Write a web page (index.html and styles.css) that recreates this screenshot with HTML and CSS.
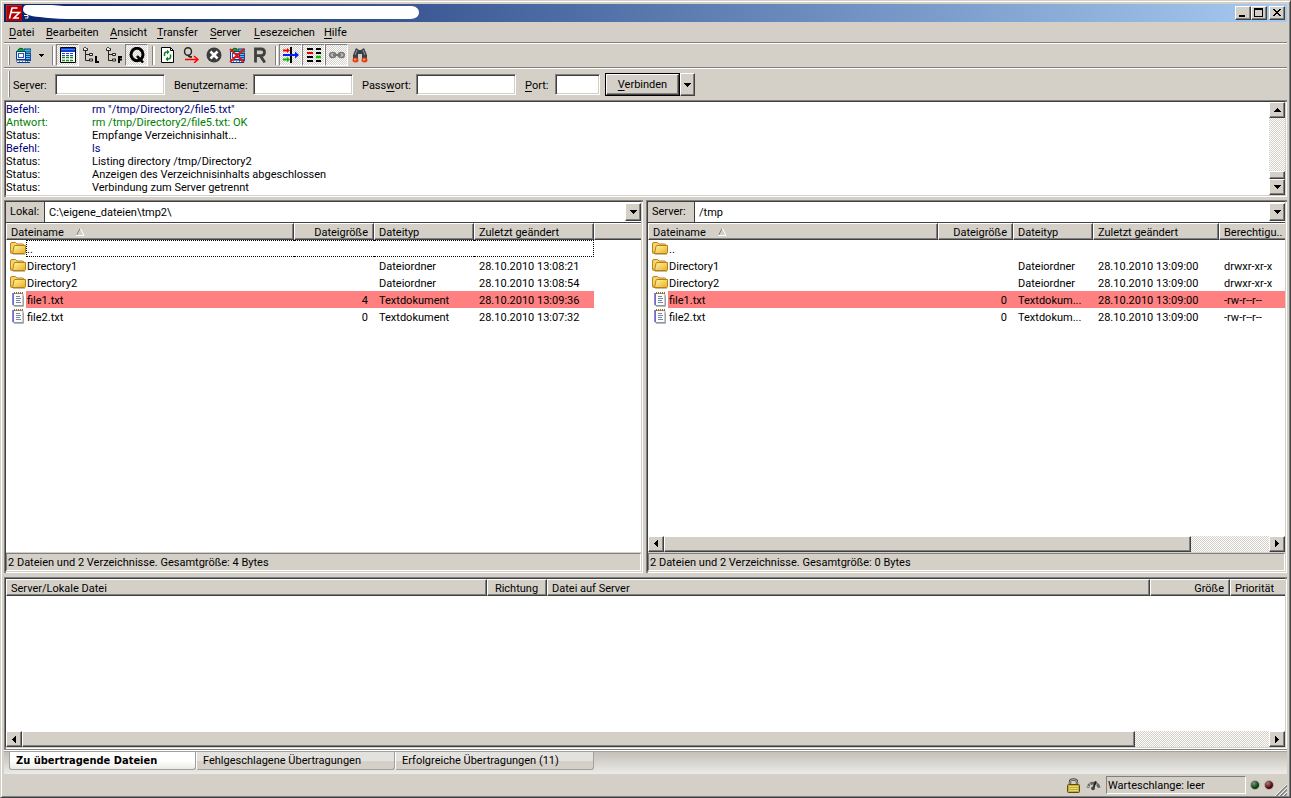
FILE: index.html
```
<!DOCTYPE html>
<html lang="de">
<head>
<meta charset="utf-8">
<title>FileZilla</title>
<link rel="stylesheet" href="styles.css">
</head>
<body>
<svg class="defs" width="0" height="0" aria-hidden="true">
  <defs>
    <linearGradient id="gold" x1="0" y1="0" x2="1" y2="1"><stop offset="0" stop-color="#fff6a8"/><stop offset="1" stop-color="#e8b020"/></linearGradient>
    <symbol id="folder" viewBox="0 0 16 16">
      <path d="M.5 11V3Q.5 1.500 2 1.500h3.500L7 3h5.500q1.500 0 1.500 1.500V6" fill="#f4d568" stroke="#bb8320"/>
      <path d="M.5 10v1.500q0 1 1 1h2z" fill="#f4d568" stroke="#bb8320"/>
      <path d="M2.500 12.500L4 5.500q.2-1 1-1h10.500v7q0 1-1 1z" fill="url(#gold)" stroke="#b77f16"/>
      <path d="M3 13.500h12" stroke="#8f8050" opacity=".5"/>
    </symbol>
    <symbol id="text" viewBox="0 0 16 16">
      <path d="M3.500 1.500h9l.5 1v11H3.500z" fill="#f8fbff" stroke="#8d97a4"/>
      <path d="M3 1v12" stroke="#6860c8" stroke-width="1.500"/>
      <path d="M4 14.500h9.500V4" fill="none" stroke="#8a8a8a" opacity=".6"/>
      <path d="M4 1h9" stroke="#a06a20" stroke-width="2" stroke-dasharray="1 1"/>
      <path d="M6 4.500h4M6 6.500h5M6 8.500h4M6 10.500h5" stroke="#7c8791"/>
    </symbol>
    <symbol id="sites" viewBox="0 0 16 16">
      <path d="M9 2h7v3H9z" fill="#20c8e0" stroke="#103878"/>
      <path d="M10 6h6v8h-6z" fill="#1747a0"/><path d="M11 7.500h4M11 9.500h4M11 11.500h4" stroke="#50c8f0"/>
      <path d="M1 5Q4-1 9 2v3z" fill="#18a030"/><path d="M3 3q2-3 5-1" fill="none" stroke="#075a18"/>
      <path d="M1.500 4.500h9v8h-9z" fill="#e8f0ff" stroke="#0a3a90"/><path d="M3 6h6v5H3z" fill="#2058c0"/><path d="M4 7h4v3H4z" fill="#fff"/>
      <path d="M1 14h12M2 15.500h13" stroke="#0a3a90"/><path d="M2 14.500h10" stroke="#fff" stroke-dasharray="2 1"/>
    </symbol>
    <symbol id="up" viewBox="0 0 7 4"><path d="M3 0h1v1h1v1h1v1h1v1H0V3h1V2h1V1h1z"/></symbol>
    <symbol id="down" viewBox="0 0 7 4"><path d="M0 0h7v1H6v1H5v1H4v1H3V3H2V2H1V1H0z"/></symbol>
    <symbol id="left" viewBox="0 0 4 7"><path d="M4 0v7H3V6H2V5H1V4H0V3h1V2h1V1h1V0z"/></symbol>
    <symbol id="right" viewBox="0 0 4 7"><path d="M0 0v7h1V6h1V5h1V4h1V3H3V2H2V1H1V0z"/></symbol>
    <symbol id="sort" viewBox="0 0 9 8"><path d="M0.500 7.500L4 0.500" stroke="#808080"/><path d="M4.500 0.500L8 7.500H0" stroke="#fff" fill="none"/></symbol>
    <symbol id="tree" viewBox="0 0 16 16">
      <path d="M2.500 4v9.500H7M2.500 7.500H7" fill="none" stroke="#222"/>
      <path d="M.5 3.500v-2L1.500.5h1l1 1h1v2zM6.500 8.500v-2h3v2zM6.500 14v-2h3v2z" fill="#eee" stroke="#222"/>
    </symbol>
  </defs>
</svg>
<div class="window">
  <header class="titlebar">
    <svg class="logo" viewBox="0 0 16 16" role="img" aria-label="FileZilla"><path d="M0 0h16v16H0z" fill="#b00000"/><path d="M0 16V0h16" fill="none" stroke="#d84040"/><path d="M3.500 13.500L6 3h5.500M5 7.500h4.500M8.500 7.500h5l-5.500 5.500h5" fill="none" stroke="#fff" stroke-width="1.600"/></svg>
    <svg class="smudge" viewBox="0 0 398 18" aria-hidden="true"><path d="M5 1H30L42 2H390q7 1 7 6.500t-8 6.500H45Q28 14.500 18 13 2 12 1 6 1 1 5 1z" fill="#fff"/><path d="M2 11.500h4v2.500H3" fill="none" stroke="#fff"/></svg>
    <div class="winbuttons">
      <button class="raised" aria-label="Minimieren"><svg width="12" height="10"><path d="M2 7h6v2H2z"/></svg></button>
      <button class="raised" aria-label="Maximieren"><svg width="12" height="10"><path d="M1 0h9v9H1zM2 2v6h7V2z" fill-rule="evenodd"/></svg></button>
      <button class="raised close" aria-label="Schließen"><svg width="12" height="10"><path d="M2 1h2v1h1v1h2V2h1V1h2v1H9v1H8v1H7v1h1v1h1v1h1v1H8V7H7V6H5v1H4v1H2V7h1V6h1V5h1V4H4V3H3V2H2z"/></svg></button>
    </div>
  </header>
  <nav class="menu">
    <a href="#"><u>D</u>atei</a><a href="#"><u>B</u>earbeiten</a><a href="#"><u>A</u>nsicht</a><a href="#"><u>T</u>ransfer</a><a href="#"><u>S</u>erver</a><a href="#"><u>L</u>esezeichen</a><a href="#"><u>H</u>ilfe</a>
  </nav>
  <div class="toolbar">
    <i class="grip"></i>
    <button class="tool first" aria-label="Servermanager"><svg viewBox="0 0 16 16"><use href="#sites"/></svg></button>
    <button class="tool drop" aria-label="Serverliste"><svg class="tiny" viewBox="0 0 5 3"><path d="M0 0h5v1H4v1H3v1H2V2H1V1H0z"/></svg></button>
    <i class="sep"></i>
    <button class="tool pressed" aria-label="Nachrichtenprotokoll"><svg viewBox="0 0 16 16"><path d="M.5.500h15v15H.5z" fill="#fff" stroke="#000"/><path d="M1 1h14v4H1z" fill="#1040d0"/><path d="M1 2.500h14" stroke="#4080f0"/><path d="M2 6.500h12M2 8.500h12" stroke="#2040e0" stroke-dasharray="3 1"/><path d="M2 10.500h12M2 13.500h12" stroke="#109020" stroke-width="1.500" stroke-dasharray="3 1"/></svg></button>
    <button class="tool" aria-label="Lokaler Verzeichnisbaum"><svg viewBox="0 0 16 16"><use href="#tree"/><path d="M13 9v6h3" fill="none" stroke="#000" stroke-width="2"/></svg></button>
    <button class="tool" aria-label="Server-Verzeichnisbaum"><svg viewBox="0 0 16 16"><use href="#tree"/><path d="M13 16V10h3M13 12.500h3" fill="none" stroke="#000" stroke-width="2"/></svg></button>
    <button class="tool pressed" aria-label="Warteschlange"><svg viewBox="0 0 16 16"><ellipse cx="8" cy="7.500" rx="6" ry="6.200" fill="none" stroke="#000" stroke-width="3"/><path d="M8 9l6 6.500" stroke="#000" stroke-width="2.500"/></svg></button>
    <i class="sep"></i>
    <button class="tool" aria-label="Aktualisieren"><svg viewBox="0 0 16 16"><path d="M1.500.500h9l3 3v12h-12z" fill="#fff" stroke="#000"/><path d="M10.500.500v3h3" fill="none" stroke="#000"/><path d="M4.500 9V7q0-2 2.500-2M10.500 7.500V10q0 2-2.500 2" fill="none" stroke="#108020" stroke-width="1.500"/><path d="M7 2.500v5L9.500 5zM8 9.500v5L5.500 12z" fill="#108020"/></svg></button>
    <button class="tool" aria-label="Warteschlange verarbeiten"><svg viewBox="0 0 16 16"><ellipse cx="5" cy="4.500" rx="3.500" ry="3.800" fill="none" stroke="#222" stroke-width="1.400"/><path d="M5 8q.5 2 4 2" fill="none" stroke="#222" stroke-width="1.500"/><path d="M2 12.500h13M11 9l4 3.500-4 3.500" fill="none" stroke="#f00" stroke-width="1.500"/></svg></button>
    <button class="tool" aria-label="Abbrechen"><svg viewBox="0 0 16 16"><circle cx="8" cy="8" r="7.500" fill="#3c3c3c"/><path d="M4.500 4.500l7 7M11.500 4.500l-7 7" stroke="#fff" stroke-width="2.500"/></svg></button>
    <button class="tool" aria-label="Trennen"><svg viewBox="0 0 16 16"><use href="#sites"/><path d="M1 2l14 13M15 2L1 15" stroke="#f01010" stroke-width="2"/></svg></button>
    <button class="tool" aria-label="Wiederherstellen"><svg viewBox="0 0 16 16"><path d="M3.500 15.500V2H9q3.500 0 3.500 3.200T9 8.700H4M8.500 9l4.300 6.500" fill="none" stroke="#404040" stroke-width="2.800"/></svg></button>
    <i class="sep"></i>
    <button class="tool pressed" aria-label="Filter"><svg viewBox="0 0 16 16"><path d="M8 0v16" stroke="#000" stroke-width="2"/><path d="M0 3.500h5" stroke="#f00" stroke-width="2"/><path d="M4 1v5l3-2.500z" fill="#f00"/><path d="M0 12.500h5" stroke="#0b0" stroke-width="2"/><path d="M4 10v5l3-2.500z" fill="#0b0"/><path d="M0 8h14" stroke="#0020ff" stroke-width="2"/><path d="M12 4.500v7L16 8z" fill="#0020ff"/></svg></button>
    <button class="tool pressed" aria-label="Verzeichnisvergleich"><svg viewBox="0 0 16 16"><path d="M1 2h6M10 2h5M10 6h5M1 10h6M1 14h6M10 14h5" stroke="#000" stroke-width="2"/><path d="M1 6h6" stroke="#e00" stroke-width="2"/><path d="M10 10h5" stroke="#0c0" stroke-width="2.500"/></svg></button>
    <button class="tool pressed" aria-label="Synchronisiertes Navigieren"><svg viewBox="0 0 16 16"><ellipse cx="3.700" cy="8" rx="3" ry="2.500" fill="#bbb" stroke="#777" stroke-width="1.500"/><ellipse cx="12.300" cy="8" rx="3" ry="2.500" fill="#bbb" stroke="#777" stroke-width="1.500"/><path d="M4 8h8" stroke="#777" stroke-width="2"/></svg></button>
    <button class="tool" aria-label="Suche"><svg viewBox="0 0 16 16"><path d="M4 1L7 3h2l3-2 3 7v6h-5V7H6v7H1V8z" fill="#3a4048"/><path d="M5 3L3 8M11 3l2 5" stroke="#99a"/><ellipse cx="3.500" cy="13" rx="3" ry="2.500" fill="#e84010"/><ellipse cx="12.500" cy="13" rx="3" ry="2.500" fill="#e84010"/><circle cx="3" cy="12.500" r="1" fill="#fa9"/><circle cx="12" cy="12.500" r="1" fill="#fa9"/></svg></button>
  </div>
  <form class="connect">
    <i class="grip"></i>
    <label for="host">Se<u>r</u>ver:</label><input id="host" type="text">
    <label for="user">Ben<u>u</u>tzername:</label><input id="user" type="text">
    <label for="pass">Pass<u>w</u>ort:</label><input id="pass" type="password">
    <label for="port"><u>P</u>ort:</label><input id="port" type="text">
    <button class="go" type="button"><span class="raised"><span><u>V</u>erbinden</span></span></button><button class="raised history" type="button" aria-label="Verlauf"><svg class="v"><use href="#down"/></svg></button>
  </form>

  <section class="log sunken">
    <dl>
      <dt class="cmd">Befehl:</dt><dd class="cmd">rm "/tmp/Directory2/file5.txt"</dd>
      <dt class="reply">Antwort:</dt><dd class="reply">rm /tmp/Directory2/file5.txt: OK</dd>
      <dt>Status:</dt><dd>Empfange Verzeichnisinhalt...</dd>
      <dt class="cmd">Befehl:</dt><dd class="cmd">ls</dd>
      <dt>Status:</dt><dd>Listing directory /tmp/Directory2</dd>
      <dt>Status:</dt><dd>Anzeigen des Verzeichnisinhalts abgeschlossen</dd>
      <dt>Status:</dt><dd>Verbindung zum Server getrennt</dd>
    </dl>
    <div class="vscroll"><button class="raised" aria-label="Nach oben"><svg class="v"><use href="#up"/></svg></button><div class="thumb raised"></div><button class="raised" aria-label="Nach unten"><svg class="v"><use href="#down"/></svg></button></div>
  </section>

  <main class="panes">
    <section class="pane sunken">
      <div class="address local"><label for="lpath">Lokal:</label><div class="combo"><select id="lpath"><option>C:\eigene_dateien\tmp2\</option></select><span class="raised arrow"><svg class="v"><use href="#down"/></svg></span></div></div>
      <div class="list">
        <table class="files">
          <colgroup><col class="w288"><col class="w80"><col class="w100"><col class="w120"><col></colgroup>
          <thead><tr><th>Dateiname<svg class="sort"><use href="#sort"/></svg></th><th class="num">Dateigröße</th><th>Dateityp</th><th>Zuletzt geändert</th><th></th></tr></thead>
          <tbody>
            <tr class="focus"><td><div class="name"><svg><use href="#folder"/></svg><span>..</span></div></td><td></td><td></td><td></td><td></td></tr>
            <tr><td><div class="name"><svg><use href="#folder"/></svg><span>Directory1</span></div></td><td></td><td>Dateiordner</td><td>28.10.2010 13:08:21</td><td></td></tr>
            <tr><td><div class="name"><svg><use href="#folder"/></svg><span>Directory2</span></div></td><td></td><td>Dateiordner</td><td>28.10.2010 13:08:54</td><td></td></tr>
            <tr class="diff"><td><div class="name"><svg><use href="#text"/></svg><span>file1.txt</span></div></td><td class="num">4</td><td>Textdokument</td><td>28.10.2010 13:09:36</td><td class="rest"></td></tr>
            <tr><td><div class="name"><svg><use href="#text"/></svg><span>file2.txt</span></div></td><td class="num">0</td><td>Textdokument</td><td>28.10.2010 13:07:32</td><td></td></tr>
          </tbody>
        </table>
      </div>
      <p class="summary">2 Dateien und 2 Verzeichnisse. Gesamtgröße: 4 Bytes</p>
    </section>
    <section class="pane sunken">
      <div class="address remote"><label for="rpath">Server:</label><div class="combo"><select id="rpath"><option>/tmp</option></select><span class="raised arrow"><svg class="v"><use href="#down"/></svg></span></div></div>
      <div class="list">
        <table class="files">
          <colgroup><col class="w290"><col class="w75"><col class="w80"><col class="w126"><col></colgroup>
          <thead><tr><th>Dateiname<svg class="sort"><use href="#sort"/></svg></th><th class="num">Dateigröße</th><th>Dateityp</th><th>Zuletzt geändert</th><th class="cut">Berechtigu..</th></tr></thead>
          <tbody>
            <tr><td><div class="name"><svg><use href="#folder"/></svg><span>..</span></div></td><td></td><td></td><td></td><td></td></tr>
            <tr><td><div class="name"><svg><use href="#folder"/></svg><span>Directory1</span></div></td><td></td><td>Dateiordner</td><td>28.10.2010 13:09:00</td><td>drwxr-xr-x</td></tr>
            <tr><td><div class="name"><svg><use href="#folder"/></svg><span>Directory2</span></div></td><td></td><td>Dateiordner</td><td>28.10.2010 13:09:00</td><td>drwxr-xr-x</td></tr>
            <tr class="diff"><td><div class="name"><svg><use href="#text"/></svg><span>file1.txt</span></div></td><td class="num">0</td><td>Textdokum...</td><td>28.10.2010 13:09:00</td><td>-rw-r--r--</td></tr>
            <tr><td><div class="name"><svg><use href="#text"/></svg><span>file2.txt</span></div></td><td class="num">0</td><td>Textdokum...</td><td>28.10.2010 13:09:00</td><td>-rw-r--r--</td></tr>
          </tbody>
        </table>
      </div>
      <div class="hscroll files-scroll"><button class="raised" aria-label="Nach links"><svg class="h"><use href="#left"/></svg></button><div class="thumb raised"></div><button class="raised" aria-label="Nach rechts"><svg class="h"><use href="#right"/></svg></button></div>
      <p class="summary">2 Dateien und 2 Verzeichnisse. Gesamtgröße: 0 Bytes</p>
    </section>
  </main>

  <section class="queue sunken">
    <div class="list">
      <table class="files">
        <colgroup><col class="w481"><col class="w60"><col><col class="w80"><col class="w55"></colgroup>
        <thead><tr><th>Server/Lokale Datei</th><th class="mid">Richtung</th><th>Datei auf Server</th><th class="num">Größe</th><th class="cut">Priorität</th></tr></thead>
      </table>
    </div>
    <div class="hscroll queue-scroll"><button class="raised" aria-label="Nach links"><svg class="h"><use href="#left"/></svg></button><div class="thumb raised"></div><button class="raised" aria-label="Nach rechts"><svg class="h"><use href="#right"/></svg></button></div>
  </section>
  <div class="tabs" role="tablist">
    <button role="tab" class="tab active" aria-selected="true">Zu übertragende Dateien</button><button role="tab" class="tab">Fehlgeschlagene Übertragungen</button><button role="tab" class="tab">Erfolgreiche Übertragungen (11)</button>
  </div>
  <footer class="status">
    <svg width="13" height="15" viewBox="0 0 13 15"><path d="M3 7V4q0-2.500 3.500-2.500T10 4v3" fill="none" stroke="#444" stroke-width="2.400"/><path d="M3 7V4q0-2.500 3.500-2.500T10 4v3" fill="none" stroke="#ccc" stroke-width=".8"/><rect x=".5" y="6.500" width="12" height="8" rx="1" fill="#c8ac38" stroke="#5a4a14"/><path d="M2 8.500h9M2 10.500h9M2 12.500h9" stroke="#e8d670"/></svg>
    <svg width="15" height="12" viewBox="0 0 16 12"><path d="M2 9Q3 4 8 4t6 5" fill="none" stroke="#666" stroke-width="3"/><path d="M4 4l1 3M11.500 4.500L10 7M1 7l3 1" stroke="#ccc"/><path d="M7.500 10l3-8" stroke="#222" stroke-width="2"/><circle cx="7.500" cy="9.500" r="2" fill="#444"/></svg>
    <span class="queue-state">Warteschlange: leer</span>
    <i class="led green"></i><i class="led red"></i>
    <svg class="size" width="12" height="12" viewBox="0 0 12 12"><path d="M0 12L12 0M4 12l8-8M8 12l4-4" stroke="#fff"/><path d="M1 12.500L12.500 1M5 12.500L12.500 5M9 12.500L12.500 9" stroke="#808080" stroke-width="1.500"/></svg>
  </footer>
</div>
</body>
</html>
```
FILE: styles.css
```
:root {
  --face: #d4d0c8;
  --shade: #808080;
  --dark: #404040;
}
* { box-sizing: border-box; }
body, button, input, select {
  font-family: Roboto, "Liberation Sans", sans-serif;
  font-size: 11px;
  line-height: 13px;
  color: #000;
}
body { margin: 0; background: var(--face); }
button { padding: 0; background: var(--face); border: 0; }
svg { display: block; flex: none; }
.defs { position: absolute; }
u { text-underline-offset: 2px; text-decoration-thickness: 1px; }

.window {
  display: flex;
  flex-direction: column;
  min-height: 100vh;
  border: 1px solid var(--face);
  border-right-color: var(--dark);
  border-bottom-color: var(--dark);
  box-shadow: inset 1px 1px #fff, inset -1px -1px var(--shade);
  padding: 3px 3px 1px;
}
.raised {
  background: var(--face);
  border: 1px solid #fff;
  border-right-color: var(--dark);
  border-bottom-color: var(--dark);
  box-shadow: inset -1px -1px var(--shade);
}
.raised, .winbuttons button, .arrow { display: flex; align-items: center; justify-content: center; }
.sunken {
  border: 1px solid;
  border-color: var(--dark) var(--face) var(--face) var(--dark);
  background: #fff;
  margin: 1px;
  box-shadow: -1px -1px var(--shade), 1px 1px #fff, 1px -1px var(--shade), -1px 1px var(--shade);
}
.v { width: 7px; height: 4px; }
.h { width: 4px; height: 7px; }

.titlebar {
  display: flex;
  align-items: center;
  height: 18px;
  padding: 0 2px;
  background: linear-gradient(90deg, #0a246a, #a6caf0);
}
.logo { width: 16px; height: 16px; }
.smudge { width: 398px; height: 18px; }
.winbuttons { display: flex; margin-left: auto; }
.winbuttons button { width: 16px; height: 14px; }
.winbuttons .close { margin-left: 2px; }

.menu {
  display: grid;
  grid-template-columns: 37px 64px 47px 53px 44px 70px auto;
  height: 22px;
  padding-left: 5px;
  border-bottom: 1px solid #fff;
  box-shadow: inset 0 -1px var(--shade);
}
.menu a { color: #000; text-decoration: none; line-height: 21px; white-space: nowrap; }

.toolbar {
  display: flex;
  height: 25px;
  padding-left: 3px;
  border-bottom: 1px solid #fff;
  box-shadow: inset 0 -1px var(--shade);
}
.grip { width: 3px; margin: 2px 0 3px; border-right: 1px solid var(--shade); box-shadow: inset -1px 0 #fff; }
.sep { width: 8px; padding: 2px 2px 2px 4px; }
.sep::before { content: ""; display: block; width: 2px; height: 19px; border-left: 1px solid var(--shade); background: #fff; }
.tool { display: flex; align-items: center; justify-content: center; width: 23px; height: 22px; border: 1px solid transparent; }
.tool.first { margin-left: 1px; }
.tool svg { width: 16px; height: 16px; }
.tool.drop { width: 14px; }
.tool .tiny { width: 5px; height: 3px; }
.tool.pressed {
  border-color: var(--shade) #fff #fff var(--shade);
  background: repeating-conic-gradient(#fff 0 25%, var(--face) 0 50%) 0 0 / 2px 2px;
}

.connect {
  display: grid;
  grid-template-columns: 6px 42px 119px 79px 109px 54px 109px 30px 50px 75px 15px;
  align-items: center;
  height: 31px;
  padding-left: 3px;
}
.connect .grip { align-self: stretch; justify-self: start; }
.connect label { padding-top: 2px; }
.connect input {
  height: 21px;
  min-width: 0;
  border: 1px solid;
  border-color: var(--shade) #fff #fff var(--shade);
  box-shadow: inset 1px 1px var(--dark), inset -1px -1px var(--face);
  background: #fff;
  padding: 2px 4px;
}
#host, #user, #pass { margin-right: 9px; }
#port { margin-right: 5px; }
.go { height: 23px; border: 1px solid #000; display: flex; align-items: stretch; }
.go .raised { flex: 1; }
.history { height: 23px; }

.log { display: flex; height: 95px; flex: none; }
.log dl { flex: 1; display: grid; grid-template-columns: 86px 1fr; grid-auto-rows: 13px; margin: 0; padding-top: 1px; }
.log dt, .log dd { margin: 0; }
.cmd { color: #000080; }
.reply { color: #008000; }
.vscroll, .hscroll { display: flex; background: repeating-conic-gradient(#fff 0 25%, var(--face) 0 50%) 0 0 / 2px 2px; }
.vscroll { flex-direction: column; width: 16px; }
.vscroll button { height: 16px; flex: none; }
.vscroll .thumb { height: 8px; margin-top: auto; }
.hscroll { height: 16px; flex: none; }
.hscroll button { width: 16px; flex: none; }
.hscroll button:last-child { margin-left: auto; }
.files-scroll .thumb { width: 82.7%; }
.queue-scroll .thumb { width: 87%; }

.panes { display: grid; grid-template-columns: 639fr 641fr; gap: 3px; flex: 376 1 0; margin-top: 3px; }
.pane { display: flex; flex-direction: column; min-width: 0; }
.address { display: flex; height: 21px; border-bottom: 1px solid var(--dark); flex: none; }
.address label { background: var(--face); border-right: 1px solid var(--dark); padding-left: 4px; line-height: 20px; flex: none; }
.local label { width: 39px; }
.remote label { width: 47px; }
.combo { flex: 1; display: flex; position: relative; }
.combo select { flex: 1; appearance: none; border: 0; background: #fff; padding: 0 4px; }
.arrow { position: absolute; right: 0; top: 1px; bottom: 1px; width: 16px; pointer-events: none; }
.list { flex: 1; min-height: 0; overflow: hidden; }
.files { width: 100%; table-layout: fixed; border-spacing: 0; }
.files th {
  height: 17px;
  padding: 2px 5px 0 4px;
  background: var(--face);
  font-weight: normal;
  text-align: left;
  white-space: nowrap;
  line-height: 13px;
  border: 1px solid var(--dark);
  border-left-color: #fff;
  border-top-color: #fff;
  box-shadow: inset -1px -1px var(--shade);
}
.files th:last-child { border-right: 0; box-shadow: inset 0 -1px var(--shade); }
.files .cut { padding-right: 0; overflow: hidden; }
.files td { height: 17px; padding: 2px 6px 0 5px; line-height: 15px; white-space: nowrap; }
.files td:first-child { padding: 0; }
.files .num { text-align: right; }
.files .mid { text-align: center; }
.sort { display: inline-block; width: 9px; height: 8px; margin-left: 12px; }
.name { display: flex; align-items: flex-end; padding-left: 4px; height: 17px; }
.name svg { width: 16px; height: 16px; }
.name span { flex: 1; height: 17px; padding: 2px 0 0 1px; line-height: 15px; }
.diff .name span, .diff td:not(:first-child):not(.rest) { background: #ff8080; }
.focus .name span { border: 1px dotted #000; border-right: 0; padding: 1px 0 0; }
.focus td:nth-child(n+2):nth-child(-n+4) { border-top: 1px dotted #000; border-bottom: 1px dotted #000; }
.focus td:nth-child(4) { border-right: 1px dotted #000; }
.summary {
  margin: 1px 0 0;
  padding-left: 1px;
  height: 18px;
  line-height: 18px;
  background: var(--face);
  border: 1px solid;
  border-color: var(--shade) #fff #fff var(--shade);
  box-shadow: 0 -1px var(--face);
  flex: none;
}
.w55 { width: 55px; }
.w60 { width: 60px; }
.w75 { width: 75px; }
.w80 { width: 80px; }
.w100 { width: 100px; }
.w120 { width: 120px; }
.w126 { width: 126px; }
.w288 { width: 288px; }
.w290 { width: 290px; }
.w481 { width: 481px; }

.queue { display: flex; flex-direction: column; flex: 170 1 0; margin-top: 5px; }

.tabs {
  display: flex;
  height: 25px;
  padding: 0 0 4px 5px;
  border-top: 1px solid var(--shade);
  background: linear-gradient(#fff 0 1px, #a0a09c 1px 2px, #c4c0b8 2px, #ecebe8);
  flex: none;
}
.tab {
  width: 199px;
  height: 18px;
  margin-top: 2px;
  padding: 0 6px;
  text-align: left;
  white-space: nowrap;
  border: 1px solid #a0a09c;
  border-top: 0;
  border-left-color: #fff;
  border-radius: 0 0 3px 3px;
  background: linear-gradient(#e4e2de 50%, var(--face) 50%);
}
.tab.active {
  width: 187px;
  font-family: "DejaVu Sans Condensed", "DejaVu Sans", sans-serif;
  font-weight: bold;
  background: linear-gradient(#fff 50%, #eceae6);
  border-left-color: #a0a09c;
}

.status { display: flex; align-items: center; justify-content: flex-end; height: 22px; flex: none; }
.status svg + svg { margin: 0 5px 0 6px; }
.queue-state { width: 140px; height: 18px; padding-left: 1px; line-height: 17px; border: 1px solid; border-color: var(--shade) #fff #fff var(--shade); }
.led { width: 10px; height: 10px; border-radius: 50%; margin-left: 4px; border: 1px solid #aaa; }
.green { background: radial-gradient(circle at 35% 30%, #7a9a7a, #0a400a 60%); }
.red { background: radial-gradient(circle at 35% 30%, #b07878, #500808 60%); }
.status .size { align-self: flex-end; margin-left: 1px; }
```
